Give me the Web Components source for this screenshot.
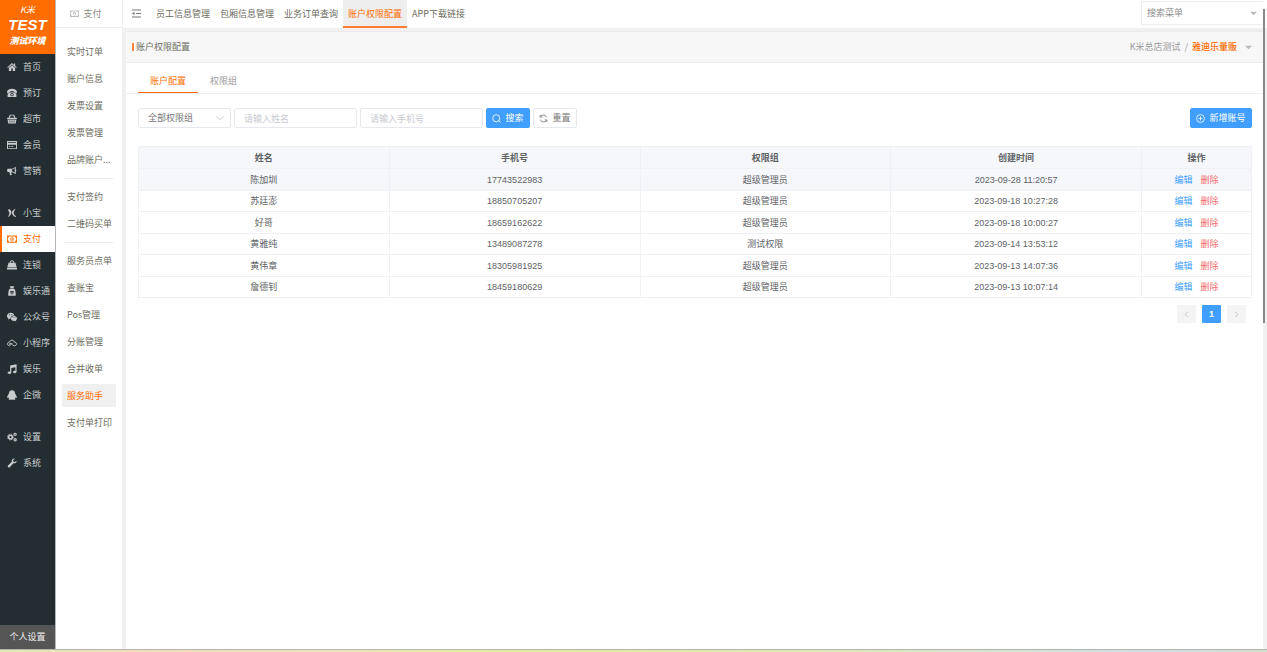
<!DOCTYPE html>
<html>
<head>
<meta charset="utf-8">
<title>账户权限配置</title>
<style>
  html, body { margin: 0; height: 100%; }
  body {
    font: 9px/14px "Noto Sans CJK SC", "Open Sans", sans-serif;
    color: #6c6c60;
    background: #f0f0f0;
    overflow: hidden;
  }
</style>
</head>
<body>
<app-shell>
  <side-nav slot="nav"></side-nav>
  <sub-menu slot="menu"></sub-menu>
  <top-bar slot="top"></top-bar>
  <page-card slot="page">
    <page-tabs></page-tabs>
    <filter-bar></filter-bar>
    <account-table></account-table>
    <page-pager></page-pager>
  </page-card>
</app-shell>
<script>
const RESET = `*{box-sizing:border-box} a{color:inherit;text-decoration:none}
  button,input,select{font:inherit;color:inherit;margin:0;outline:0;border-radius:0}
  button{background:none;border:0;padding:0;cursor:pointer}
  ul{list-style:none;margin:0;padding:0} nav{display:block}`;

function define(name, css, html) {
  const t = document.createElement('template');
  t.innerHTML = `<style>${RESET}${css}</style>${html}`;
  customElements.define(name, class extends HTMLElement {
    constructor() {
      super();
      this.attachShadow({ mode: 'open' }).append(t.content.cloneNode(true));
    }
  });
}

/* 16-unit icon set */
const ICONS = {
  home: '<path d="M8 1.500 0.500 8.400l1 1.100L8 3.800l6.500 5.700 1-1.100-2.500-2.300V2.500h-2v1.800z"/><path d="M8 5 3 9.400V14.500h3.800V10.500h2.400v4H13V9.400z"/>',
  phone: '<path d="M8 1C3.500 1 0 3.200 0 6.300c0 1.400.5 1.900 1.500 1.800l2.200-.4c.6-.2.7-.6.6-1.700C6.600 5 9.400 5 11.700 6c-.1 1.100 0 1.500.6 1.700l2.200.4c1 .1 1.500-.4 1.500-1.800C16 3.200 12.500 1 8 1z"/><path fill-rule="evenodd" d="M4.800 7.200h6.400l3.800 2v5.300H1V9.200zM8 7.900a2.700 2.700 0 1 0 0 5.400 2.700 2.700 0 0 0 0-5.400zm0 1.300a1.400 1.400 0 1 1 0 2.800 1.400 1.400 0 0 1 0-2.800z"/>',
  basket: '<path d="M4.500 1 2.500 6h2l1.500-3.500h4L11.500 6h2l-2-5z"/><path d="M.3 6h15.400v2.400H.3z"/><path fill-rule="evenodd" d="M1 9h14l-1 6H2zM4 10.200v3.300h1.200v-3.300zm3.400 0v3.300h1.200v-3.300zm3.400 0v3.300H12v-3.300z"/>',
  card: '<path fill-rule="evenodd" d="M0 1.500h16v13H0zM1.500 3v1.500h13V3zM1.500 7.500V13h13V7.500zM3 10h2.500v1.300H3zm3.500 0H10v1.300H6.500z"/>',
  horn: '<path fill-rule="evenodd" d="M14 1v4.500c1.300.2 1.300 2.800 0 3V13c-2.500-2-4.500-3-7-3.200-.8.600-.4 1.300.2 1.800-.5.800.1 1.500.8 2.300-1 1-2.700.8-3.300.2C4.300 12.500 3.900 11.200 4.100 9.700H2C1 9.700.3 9 .3 8V6c0-1 .7-1.700 1.700-1.700h4C9 4.300 11.500 3 14 1zm-1.500 2.700C11 4.800 9.500 5.400 7.800 5.600v2.900c1.700.2 3.200.8 4.700 1.800z"/>',
  spark: '<path d="M1 3 4 2c2 1.500 3 3.200 3 5 0 3-2 5.500-6 7.700C3 11.500 4 9.500 3.700 7.500 3.400 5.700 2.500 4.300 1 3zM14 1C10 2.500 8 4.500 7.800 7c0 2.500 1.700 5 5.200 7.500l1.700-1.200C12 11.500 10.700 9.800 10.700 8c0-2 1-4 3.300-7z"/>',
  money: '<path fill-rule="evenodd" d="M0 2.500h16v11.500H0zM3 4C3 5.300 2.300 6 1.300 6v4.500c1 0 1.700.700 1.700 2h10c0-1.300.700-2 1.700-2V6c-1 0-1.700-.7-1.700-2zM8 5c1.600 0 2.700 1.400 2.700 3.250S9.600 11.500 8 11.500 5.300 10.100 5.300 8.250 6.400 5 8 5zm-.8 1.500-.9.700.5.600.4-.2v2h-.8v.9h2.900v-.9h-.8V6.500z"/>',
  bag: '<path fill-rule="evenodd" d="M8 .5c2.200 0 3.500 1.600 3.700 4h1.800l2.200 7.500H.3L2.500 4.500h1.800C4.500 2.100 5.800.5 8 .5zM8 2C6.700 2 6 3 5.800 4.500h4.400C10 3 9.300 2 8 2zM0 12.800h16V15H0z"/>',
  pouch: '<path fill-rule="evenodd" d="M4.500.5h7l-1.200 3H5.700zM4.500 4.200h7c2 2 2.500 4.800 2.500 11.300H2C2 9 2.500 6.200 4.500 4.200zM5 8v1.300h2.300v1H5v1.200h2.300v2h1.400v-2H11v-1.200H8.700v-1H11V8z"/>',
  wechat: '<path fill-rule="evenodd" d="M6 1c3.100 0 5.500 1.800 5.900 4.500C8.400 5.300 5.600 7.400 5.600 10.200l.1 1-1.700-.3-2.400 1.200.6-2.100C.8 9 0 7.800 0 6.200 0 3.300 2.700 1 6 1zM4 3.700a.8.8 0 1 0 0 1.700.8.8 0 0 0 0-1.700zm4 0a.8.8 0 1 0 0 1.700.8.8 0 0 0 0-1.700z"/><path fill-rule="evenodd" d="M11.200 6.300c2.700 0 4.800 1.800 4.800 4 0 1.200-.6 2.200-1.700 3l.5 1.900-2-1.100c-3.700.7-6.400-1.200-6.400-3.800 0-2.200 2.100-4 4.800-4zM9.800 8.300a.7.7 0 1 0 0 1.400.7.7 0 0 0 0-1.400zm3 0a.7.7 0 1 0 0 1.400.7.7 0 0 0 0-1.400z"/>',
  cloud: '<path fill="none" stroke="currentColor" stroke-width="1.500" d="M4.500 12.500C2.200 12.500.8 11.200.8 9.400S2.200 6.500 4 6.500C4.500 4.500 6 3.500 8 3.500c2 0 3.300 1.300 3.600 3 2.200 0 3.600 1.300 3.600 3s-1.400 3-3.400 3c-4 0-4.300-5.500-7.300-4-1.300.8-.8 2.500.5 2.500 1.500 0 2.500-1.500 3.500-3"/>',
  music: '<path d="M5 2.500 15.300.5v11.700c0 1.400-1.300 2.500-3 2.500s-2.800-.8-2.800-1.900 1.300-2.100 2.900-2h1V5L6.900 6.300v7.200c0 1.400-1.300 2.500-3.100 2.500S1 15.200 1 14.100 2.300 12 3.900 12H5z"/>',
  qq: '<path d="M8 .3c3.300 0 5 2.200 5 5.700 1.700 2 2.900 4 2.600 6-.2 1-.9.800-1.700-.4-.2.800-.7 1.500-1.300 2.100 1.500.8.800 2-1.300 2-1.600 0-2.700-.3-3.300-.7-.6.400-1.700.7-3.300.7-2.100 0-2.800-1.200-1.300-2-.6-.6-1.100-1.300-1.300-2.100C1.300 12.800.6 13 .4 12 .1 10 1.300 8 3 6 3 2.500 4.700.3 8 .3z"/>',
  gears: '<g fill="none" stroke="currentColor"><circle cx="5.500" cy="8" r="3" stroke-width="2.400"/><circle cx="5.500" cy="8" r="4.700" stroke-width="1.500" stroke-dasharray="1.850 1.850"/><circle cx="13" cy="3.700" r="1.800" stroke-width="1.800"/><circle cx="13" cy="12.300" r="1.800" stroke-width="1.800"/></g>',
  wrench: '<path d="M15.300 4.200c.5 2.900-2.200 5-5 4.200L4.500 14.600c-1.800 1.800-4.400-.8-2.800-2.700L7.700 6c-.8-3 1.700-5.600 4.600-5L9.700 3.700l.5 2.200 2.300.6z"/>',
  fold: '<path d="M0 1h16v1.500H0zM7 7.200h9v1.500H7zM0 13.500h16V15H0zM4.500 5v6L0 8z"/>',
  search: '<g fill="none" stroke="currentColor" stroke-width="1.500"><circle cx="7.500" cy="7.500" r="6.300"/><path d="m12 12 3 3"/></g>',
  refresh: '<g fill="none" stroke="currentColor" stroke-width="1.500"><path d="M2 1.500v4h4M14 14.500v-4h-4M2.200 5.300A6.300 6.300 0 0 1 13.800 6M13.800 10.700A6.300 6.300 0 0 1 2.200 10"/></g>',
  plus: '<g fill="none" stroke="currentColor" stroke-width="1.400"><circle cx="8" cy="8" r="7"/><path d="M8 4.500v7M4.500 8h7"/></g>',
  down: '<path fill="none" stroke="currentColor" stroke-width="1.500" d="m1 4.500 7 7 7-7"/>',
  left: '<path fill="none" stroke="currentColor" stroke-width="1.800" d="m11 2-6 6 6 6"/>',
  right: '<path fill="none" stroke="currentColor" stroke-width="1.800" d="m5 2 6 6-6 6"/>',
  caret: '<path d="M0 4h16l-8 8z"/>'
};
customElements.define('ui-icon', class extends HTMLElement {
  constructor() { super(); this.attachShadow({ mode: 'open' }); }
  connectedCallback() {
    this.shadowRoot.innerHTML = `<style>:host{display:inline-block;flex:none;width:var(--size,9px);height:var(--size,9px)}
      svg{display:block;width:100%;height:100%;fill:currentColor}</style>
      <svg viewBox="0 0 16 16" aria-hidden="true">${ICONS[this.getAttribute('name')]}</svg>`;
  }
});

define('app-shell', `
  :host{display:flex;flex-direction:column;height:100vh}
  .body{flex:1;min-height:0;display:grid;grid-template-columns:56px 67px minmax(0,1fr)}
  .work{display:flex;flex-direction:column;min-height:0;position:relative}
  ::slotted([slot=page]){flex:1}
  .bar{position:absolute;right:2px;top:9px;width:2px;height:314px;background:#888}
  footer{height:3px;border-top:1px solid #b4b4ae;background:linear-gradient(90deg,#dfeab5,#f2dcbd 10%,#f0e2c0 27%,#e6ee9c 36%,#e2ec9e 48%,#dfe9b4 62%,#d5e6cc 76%,#cddfe6 91%,#d2dfcc)}
`, `<div class="body"><slot name="nav"></slot><slot name="menu"></slot>
  <div class="work"><slot name="top"></slot><slot name="page"></slot><div class="bar"></div></div></div><footer></footer>`);

const navGroups = [
  [['home','首页'],['phone','预订'],['basket','超市'],['card','会员'],['horn','营销']],
  [['spark','小宝'],['money','支付'],['bag','连锁'],['pouch','娱乐通'],['wechat','公众号'],['cloud','小程序'],['music','娱乐'],['qq','企微']],
  [['gears','设置'],['wrench','系统']]
];
define('side-nav', `
  :host{display:flex;flex-direction:column;background:#242e32;color:#c9cccd;border-right:1px solid #b5b8b9}
  .logo{height:54px;background:#ff6c00;color:#fff;font-style:italic;display:flex;flex-direction:column;align-items:center;padding-top:4px}
  .logo span{line-height:12px}
  .logo b{font:italic 700 15px/17px "Liberation Sans",sans-serif}
  .logo strong{font-weight:900;line-height:14px;margin-top:1px}
  ul+ul{margin-top:16px}
  a{display:flex;align-items:center;height:26px;padding-left:7px;gap:6px}
  a[aria-current]{background:#fff;color:#ff6c00;border-left:2px solid #ff6c00;padding-left:5px}
  ui-icon{--size:10px}
  button{margin-top:auto;height:24px;background:#555;color:#eee}
`, `<div class="logo"><span>K米</span><b>TEST</b><strong>测试环境</strong></div><nav>${
  navGroups.map(g => `<ul>${g.map(([i,t]) => `<li><a href="#"${t==='支付'?' aria-current="page"':''}><ui-icon name="${i}"></ui-icon>${t}</a></li>`).join('')}</ul>`).join('')
}</nav><button>个人设置</button>`);

const menuGroups = [
  ['实时订单','账户信息','发票设置','发票管理','品牌账户...'],
  ['支付签约','二维码买单'],
  ['服务员点单','查账宝','Pos管理','分账管理','合并收单','服务助手','支付单打印']
];
define('sub-menu', `
  :host{display:block;background:#fff;border-right:1px solid #eee}
  header{height:28px;border-bottom:1px solid #eee;display:flex;align-items:center;justify-content:center;gap:4px;padding-right:6px;color:#8a8a84}
  ui-icon{color:#bbb}
  nav{padding:10px 6px 0}
  li{padding:2px 0;height:27px}
  a{display:block;height:23px;line-height:23px;padding-left:5px;white-space:nowrap}
  a[aria-current]{background:#f0f0f0;color:#ff6c00}
  hr{border:0;height:1px;background:#ebebeb;margin:5px 3px 4px}
`, `<header><ui-icon name="money"></ui-icon>支付</header><nav>${
  menuGroups.map(g => `<ul>${g.map(t => `<li><a href="#"${t==='服务助手'?' aria-current="page"':''}>${t}</a></li>`).join('')}</ul>`).join('<hr>')
}</nav>`);

define('top-bar', `
  :host{display:flex;height:28px;background:#fff;align-items:stretch}
  .fold{width:28px;display:flex;align-items:center;padding:0 0 2px 9px}
  .fold ui-icon{--size:9px;color:#777}
  nav{display:flex;flex:1}
  a{padding:0 5px;line-height:27px;height:28px}
  a[aria-current]{background:#eee;color:#ff6c00;border-bottom:2px solid #ff7d33}
  label{display:flex;align-items:center;width:122px;height:24px;margin:1px 4px 0 0;border:1px solid #eee;border-right:0;padding:0 6px 0 5px}
  input{border:0;padding:0;width:100%;min-width:0;background:none}
  input::placeholder{color:#8c8c8c;opacity:1}
  ui-icon{color:#bbb;--size:7px}
`, `<button class="fold" aria-label="收起菜单"><ui-icon name="fold"></ui-icon></button>
  <nav>${['员工信息管理','包厢信息管理','业务订单查询','账户权限配置','APP下载链接'].map((t,i)=>`<a href="#"${i===3?' aria-current="page"':''}>${t}</a>`).join('')}</nav>
  <label><input placeholder="搜索菜单" aria-label="搜索菜单"><ui-icon name="caret"></ui-icon></label>`);

define('page-card', `
  :host{display:block;margin:3px 4px 0 3px;background:#fff;min-height:0}
  header{display:flex;align-items:center;justify-content:space-between;height:32px;background:#f7f7f7;border:1px solid #ebebeb;border-width:1px 0;padding:0 11px 0 6px}
  h1{margin:0;font-size:9px;font-weight:400;line-height:14px;display:flex;align-items:center;gap:2px}
  h1::before{content:"";width:2px;height:8px;background:#ff8540}
  button{display:flex;align-items:center;gap:4px;color:#999}
  b{font-weight:500;color:#ff6c00}
  ui-icon{--size:7px;color:#bbb;margin-left:4px}
`, `<header><h1>账户权限配置</h1><button><span>K米总店测试</span><span>/</span><b>雅迪乐量贩</b><ui-icon name="caret"></ui-icon></button></header><slot></slot>`);

define('page-tabs', `
  :host{display:flex;border-bottom:1px solid #eee;padding-left:12px;height:30px}
  button{padding:6px 12px 0;color:#999;height:30px;border-bottom:1px solid transparent}
  button[aria-selected=true]{color:#ff6c00;border-color:#ff6c00}
`, `<button role="tab" aria-selected="true">账户配置</button><button role="tab" aria-selected="false">权限组</button>`);

define('filter-bar', `
  :host{display:flex;gap:3px;padding:14px 11px 0 12px;align-items:center}
  .sel{position:relative;width:93px;color:#777}
  .sel ui-icon{position:absolute;right:7px;top:6px;--size:8px;color:#bbb;pointer-events:none}
  select,input{appearance:none;display:block;width:100%;height:20px;border:1px solid #e6e8ee;border-radius:2px;background:#fff;padding:0 9px;line-height:18px}
  input{width:123px}
  input::placeholder{color:#c8cad0;opacity:1}
  button{display:flex;align-items:center;justify-content:center;gap:4px;height:20px;width:44px;border:1px solid #e6e8ee;border-radius:2px;color:#777}
  .primary{background:#409eff;border-color:#409eff;color:#fff}
  .add{margin-left:auto;width:62px}
`, `<div class="sel"><select aria-label="权限组"><option>全部权限组</option></select><ui-icon name="down"></ui-icon></div>
  <input placeholder="请输入姓名" aria-label="姓名"><input placeholder="请输入手机号" aria-label="手机号">
  <button class="primary"><ui-icon name="search"></ui-icon>搜索</button><button><ui-icon name="refresh"></ui-icon>重置</button>
  <button class="primary add"><ui-icon name="plus"></ui-icon>新增账号</button>`);

const rows = [
  ['陈加圳','17743522983','超级管理员','2023-09-28 11:20:57'],
  ['苏廷澎','18850705207','超级管理员','2023-09-18 10:27:28'],
  ['好哥','18659162622','超级管理员','2023-09-18 10:00:27'],
  ['黄雅纯','13489087278','测试权限','2023-09-14 13:53:12'],
  ['黄伟章','18305981925','超级管理员','2023-09-13 14:07:36'],
  ['詹德钊','18459180629','超级管理员','2023-09-13 10:07:14']
];
define('account-table', `
  :host{display:block;padding:18px 11px 0 12px;font-family:"Liberation Sans","Noto Sans CJK SC",sans-serif}
  table{width:100%;height:152px;table-layout:fixed;border-collapse:collapse;text-align:center;line-height:14px;color:#606266}
  th,td{padding:1px 0 0;border:1px solid #eff1f5}
  th{height:22px;background:#f5f7fa;font-weight:700}
  th:last-child{width:110px}
  tbody tr:first-child{background:#f5f7fa}
  a{color:#409eff} a+a{color:#f56c6c;margin-left:8px}
`, `<table><thead><tr>${['姓名','手机号','权限组','创建时间','操作'].map(t=>`<th>${t}</th>`).join('')}</tr></thead><tbody>${
  rows.map(r=>`<tr>${r.map(c=>`<td>${c}</td>`).join('')}<td><a href="#">编辑</a><a href="#">删除</a></td></tr>`).join('')
}</tbody></table>`);

define('page-pager', `
  :host{display:flex;justify-content:flex-end;gap:6px;padding:7px 17px 0 0;font-family:"Liberation Sans",sans-serif}
  button{width:19px;height:18px;background:#f4f4f5;border-radius:1px;display:grid;place-items:center;color:#b4b8c0}
  .on{background:#409eff;color:#fff;font-weight:700}
  ui-icon{--size:7px}
`, `<button aria-label="上一页" disabled><ui-icon name="left"></ui-icon></button><button class="on">1</button><button aria-label="下一页" disabled><ui-icon name="right"></ui-icon></button>`);
</script>
</body>
</html>
